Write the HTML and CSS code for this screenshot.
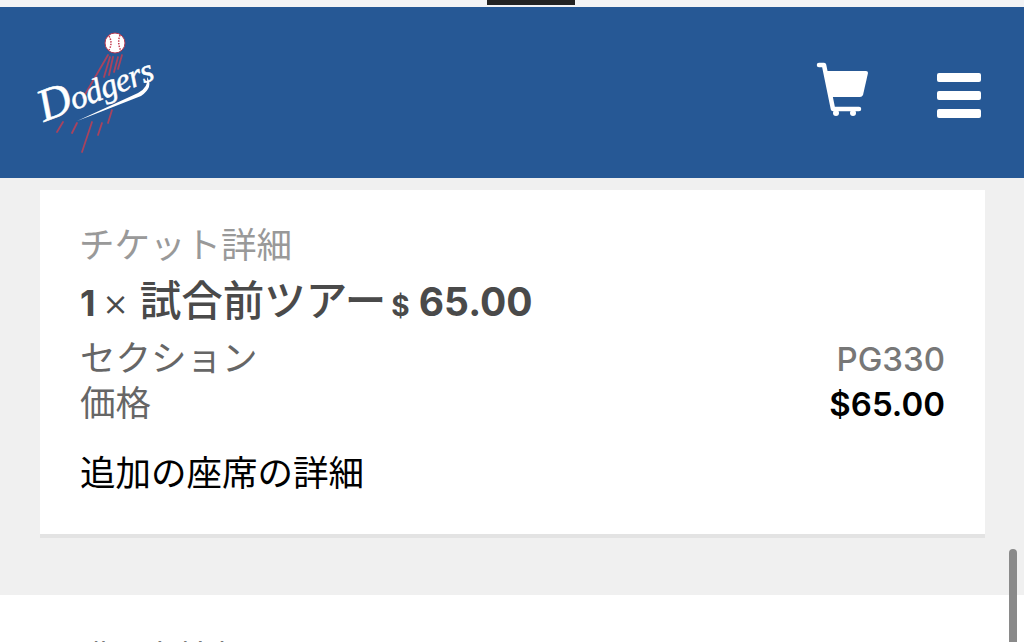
FILE: index.html
```html
<!DOCTYPE html>
<html lang="ja">
<head>
    <meta charset="utf-8">
    <title>チケット詳細</title>
    <link rel="stylesheet" href="styles.css">
</head>
<body>
    <div class="top-strip"><div class="notch"></div></div>
    <header class="site-header">
        <svg class="logo" width="130" height="130" viewBox="0 0 130 130">
            <g stroke="#a8435f" stroke-width="1.8" fill="none" stroke-linecap="round">
                <path d="M78 30 L53 73"/>
                <path d="M80 32 L74 52"/>
                <path d="M83 32 L79 50"/>
                <path d="M88 32 L84 47"/>
                <path d="M92 30 L88 44"/>
                <path d="M33 97 L27 107"/>
                <path d="M47 98 L42 108"/>
                <path d="M62 97 L52 127"/>
                <path d="M72 98 L68 110"/>
                <path d="M82 85 L78 98"/>
            </g>
            <circle cx="85" cy="18" r="10" fill="#fff" stroke="#b5394f" stroke-width="1"/>
            <path d="M79 11 Q83 18 79 25 M90 10 Q87 18 91 26" stroke="#c2384d" stroke-width="1.500" fill="none" stroke-dasharray="1.500 1.200"/>
            <text class="logo-text" x="14" y="97" transform="rotate(-21 14 97)"><tspan class="logo-cap">D</tspan>odgers</text>
            <path d="M47 96 L108 68 Q119 62 117 52 Q124 62 111 71 L60 91 Z" fill="#fff"/>
        </svg>
        <div class="header-icons">
            <svg class="cart" width="54" height="58" viewBox="0 0 54 58">
                <path d="M3 3 H8 L17 47 H43" stroke="#fff" stroke-width="4.500" fill="none" stroke-linecap="round" stroke-linejoin="round"/>
                <path d="M9 9 H50 Q52 9 52 11 L47 33 Q46 35 44 35 H14 Z" fill="#fff"/>
                <circle cx="20" cy="51" r="3" fill="#fff"/>
                <circle cx="37" cy="51" r="3" fill="#fff"/>
            </svg>
            <div class="burger">
                <span></span>
                <span></span>
                <span></span>
            </div>
        </div>
    </header>
    <main class="page">
        <section class="card">
            <p class="card-title">チケット詳細</p>
            <p class="ticket-line"><b class="qty">1</b><span class="times">×</span><span class="ticket-name">試合前ツアー</span><b class="ticket-price"><span class="dollar">$</span> 65.00</b></p>
            <div class="row">
                <span class="row-label">セクション</span>
                <span class="row-value">PG330</span>
            </div>
            <div class="row">
                <span class="row-label">価格</span>
                <span class="row-value price">$65.00</span>
            </div>
            <p class="more">追加の座席の詳細</p>
        </section>
    </main>
    <section class="next-section">
        <p class="next-title">購入者情報</p>
    </section>
    <div class="scrollbar"></div>
</body>
</html>
```

FILE: styles.css
```css
html, body {
    height: 100%;
}
body {
    margin: 0;
    height: 642px;
    overflow: hidden;
    background-color: #f0f0f0;
    font-family: Inter, "Noto Sans CJK JP", sans-serif;
    color: #4a4a4a;
}
p {
    margin: 0;
}
.top-strip {
    height: 7px;
    background: #f2f3f5;
    display: flex;
    justify-content: center;
}
.notch {
    width: 88px;
    height: 5px;
    margin-left: 38px;
    background: #222;
}
.site-header {
    height: 171px;
    background: #265895;
    display: flex;
    justify-content: space-between;
    align-items: flex-start;
    padding-left: 30px;
    padding-right: 43px;
}
.logo {
    margin-top: 18px;
    overflow: visible;
}
.logo-text {
    font-family: "Liberation Serif", serif;
    font-style: italic;
    font-size: 33px;
    letter-spacing: -0.5px;
    fill: #fff;
    stroke: #fff;
    stroke-width: 0.5px;
}
.logo-cap {
    font-size: 46px;
}
.header-icons {
    display: flex;
    align-items: flex-start;
    gap: 67px;
    margin-top: 55px;
}
.burger {
    display: flex;
    flex-direction: column;
    gap: 9px;
    width: 44px;
    margin-top: 11px;
}
.burger span {
    display: block;
    height: 9px;
    background: #fff;
    border-radius: 2px;
}
.page {
    padding: 12px 39px 0 40px;
}
.card {
    height: 344px;
    background: #fff;
    border-bottom: 4px solid #e3e3e3;
    padding: 0 40px;
    display: flex;
    flex-direction: column;
}
.card-title {
    font-size: 35.5px;
    line-height: 40px;
    margin-top: 36px;
    margin-left: -1px;
    color: #999;
}
.ticket-line {
    font-size: 41.5px;
    line-height: 50px;
    margin-top: 10px;
    margin-bottom: 2px;
    color: #4a4a4a;
    white-space: nowrap;
}
.qty {
    font-size: 36px;
}
.times {
    font-size: 40px;
    font-weight: 300;
    margin-left: 7px;
    margin-right: 11px;
}
.ticket-name {
    font-weight: 500;
}
.ticket-price {
    font-size: 39px;
    margin-left: 5px;
}
.dollar {
    font-size: 28px;
}
.row {
    display: flex;
    justify-content: space-between;
    align-items: center;
    height: 45px;
}
.row-label {
    font-size: 35.5px;
    color: #666;
}
.row-value {
    font-size: 33px;
    font-weight: 500;
    margin-top: 7px;
    color: #777;
}
.row-value.price {
    font-weight: 600;
    color: #000;
}
.more {
    font-size: 35.5px;
    color: #000;
    margin-top: 22px;
}
.next-section {
    margin-top: 57px;
    height: 60px;
    background: #fff;
    padding: 43px 0 0 77px;
}
.next-title {
    font-size: 34px;
    line-height: 40px;
    color: #777;
}
.scrollbar {
    position: absolute;
    left: 1009px;
    top: 549px;
    width: 8px;
    height: 93px;
    border-radius: 4px 4px 0 0;
    background: #8a8a8a;
}
```
